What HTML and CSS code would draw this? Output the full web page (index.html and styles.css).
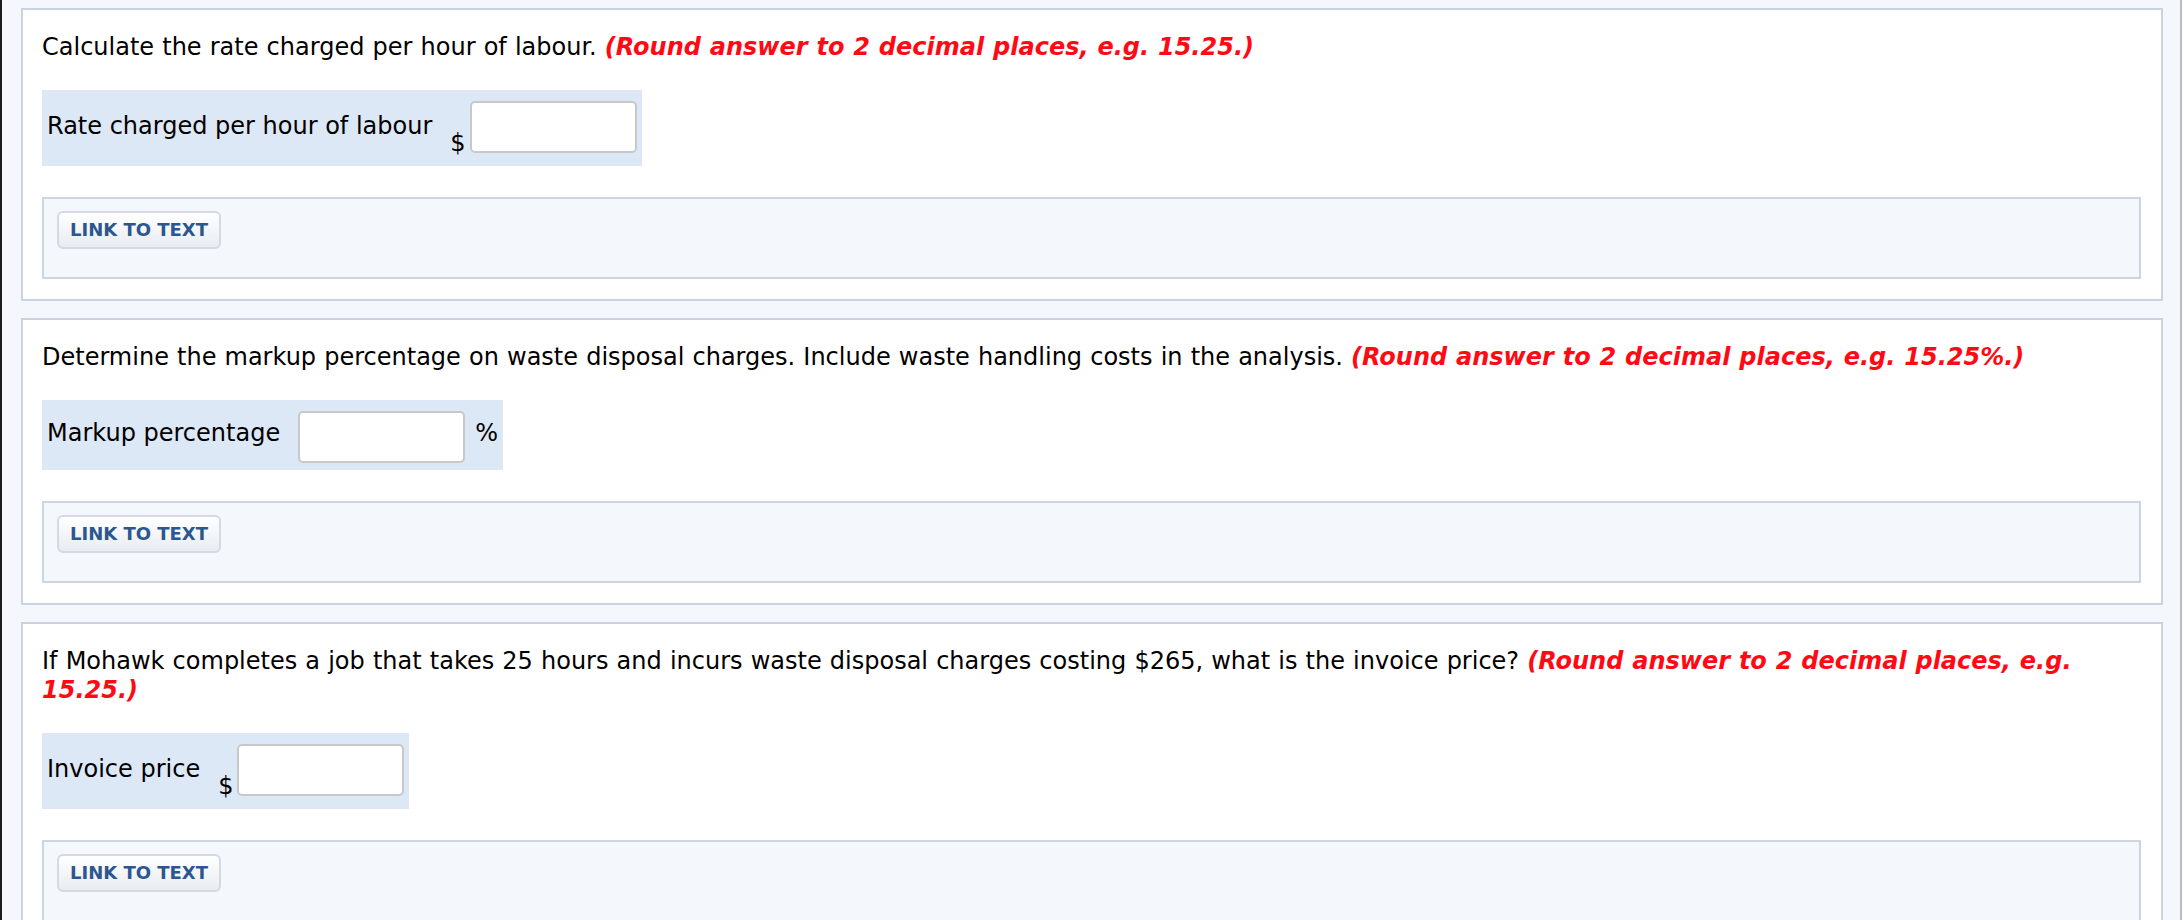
FILE: index.html
```html
<!DOCTYPE html>
<html lang="en">
<head>
<meta charset="utf-8">
<title>Questions</title>
<link rel="stylesheet" href="styles.css">
</head>
<body>
<div class="page">

  <section class="card">
    <p class="question">Calculate the rate charged per hour of labour. <em class="hint">(Round answer to 2 decimal places, e.g. 15.25.)</em></p>
    <div class="field-row">
      <span class="label">Rate charged per hour of labour</span>
      <span class="currency-cell"><span class="unit-before">$</span><input class="answer" type="text"></span>
    </div>
    <div class="link-box">
      <button class="link-btn" type="button">LINK TO TEXT</button>
    </div>
  </section>

  <section class="card">
    <p class="question">Determine the markup percentage on waste disposal charges. Include waste handling costs in the analysis. <em class="hint">(Round answer to 2 decimal places, e.g. 15.25%.)</em></p>
    <div class="field-row percent-row">
      <span class="label">Markup percentage</span>
      <span class="percent-cell"><input class="answer" type="text"></span>
      <span class="unit-after">%</span>
    </div>
    <div class="link-box">
      <button class="link-btn" type="button">LINK TO TEXT</button>
    </div>
  </section>

  <section class="card">
    <p class="question">If Mohawk completes a job that takes 25 hours and incurs waste disposal charges costing $265, what is the invoice price? <em class="hint">(Round answer to 2 decimal places, e.g. 15.25.)</em></p>
    <div class="field-row">
      <span class="label">Invoice price</span>
      <span class="currency-cell"><span class="unit-before">$</span><input class="answer" type="text"></span>
    </div>
    <div class="link-box">
      <button class="link-btn" type="button">LINK TO TEXT</button>
    </div>
  </section>

</div>
</body>
</html>
```

FILE: styles.css
```css
html, body {
  margin: 0;
  padding: 0;
  background: #ffffff;
}

body {
  font-family: "DejaVu Sans", Verdana, sans-serif;
  font-size: 24px;
  color: #000;
}

.page {
  margin-right: 2px;
  min-height: 100vh;
  box-sizing: border-box;
  background: #f4f7fb;
  border-left: 2px solid #1c1c1c;
  border-right: 2px solid #b9bdc3;
  padding: 8px 17px 0 19px;
  display: flex;
  flex-direction: column;
  gap: 17px;
}

.card {
  background: #ffffff;
  border: 2px solid #cad3df;
  padding: 23px 20px 20px 19px;
}

.question {
  margin: 0 0 28px;
  line-height: 29px;
  word-spacing: 0.5px;
}

.hint {
  color: #ff0a14;
  font-weight: bold;
  font-style: italic;
}

.field-row {
  display: flex;
  width: fit-content;
  align-items: center;
  background: #dde8f6;
  padding: 0 5px 0 5px;
  margin-bottom: 31px;
}

.label {
  margin-right: 18px;
  line-height: 29px;
  padding-bottom: 4px;
}

.currency-cell {
  display: flex;
  align-items: flex-end;
  padding: 11px 0 13px;
}

.unit-before {
  line-height: 20px;
  margin-right: 4px;
}

.percent-cell {
  display: flex;
  padding: 11px 0 7px;
}

.unit-after {
  margin-left: 10px;
  line-height: 29px;
  padding-bottom: 4px;
}

.answer {
  box-sizing: border-box;
  width: 167px;
  height: 52px;
  margin: 0;
  border: 2px solid #c8c8c8;
  border-radius: 5px;
  background: #ffffff;
  font-family: inherit;
  font-size: 24px;
  padding: 0 8px;
}

.link-box {
  background: #f4f7fb;
  border: 2px solid #cdd5e0;
  padding: 12px 13px 28px;
}

.link-btn {
  box-sizing: border-box;
  display: flex;
  align-items: center;
  justify-content: center;
  height: 38px;
  padding: 0 11px;
  border: 2px solid #d3dae3;
  border-radius: 6px;
  background: linear-gradient(#ffffff, #e8ecf1);
  color: #2b5690;
  font-family: "DejaVu Sans", Verdana, sans-serif;
  font-weight: bold;
  font-size: 18px;
  line-height: 1;
  cursor: pointer;
}
```
